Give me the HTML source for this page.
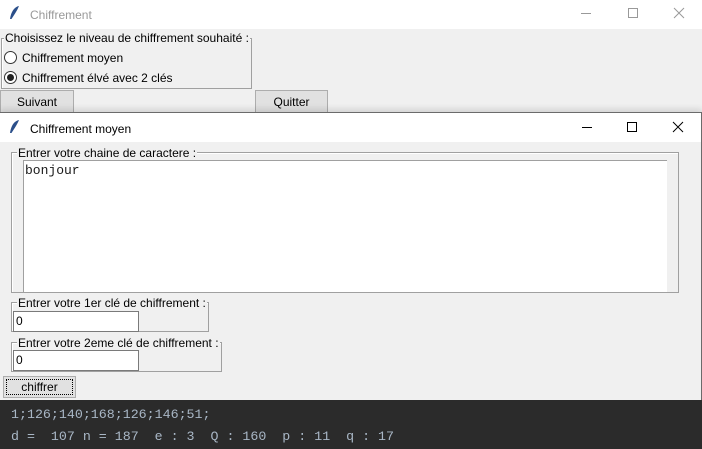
<!DOCTYPE html>
<html><head><meta charset="utf-8"><style>
*{margin:0;padding:0;box-sizing:border-box}
body{width:702px;height:449px;overflow:hidden;background:#f0f0f0;position:relative;font-family:"Liberation Sans",sans-serif;font-size:12px;color:#000}
.a{position:absolute}
.lf{position:absolute;border:1px solid #a0a0a0;box-shadow:inset 1px 1px 0 #fff}
.lbl{position:absolute;background:#f0f0f0;padding:0 1px;white-space:nowrap;line-height:13px}
.btn{position:absolute;background:#e1e1e1;border:1px solid #adadad;text-align:center;line-height:22px}
.ent{position:absolute;background:#fff;border:1px solid #7a7a7a;padding-left:2px;line-height:19px}
.rad{position:absolute;width:13px;height:13px;border:1px solid #333;border-radius:50%;background:#fff}
</style></head><body>
<div class="a" style="left:0;top:0;width:702px;height:29px;background:#fff"></div>
<svg class="a" style="left:8px;top:5px" width="12" height="16" viewBox="0 0 12 16"><path d="M11 1 C6 2 3 7 2 14 L3.5 14 C6 10 9 6 11 1Z" fill="#2b4f8a"/></svg>
<div class="a" style="left:30px;top:8px;color:#999;font-size:12px">Chiffrement</div>
<div class="a" style="left:581px;top:13px;width:10px;height:1px;background:#999"></div>
<div class="a" style="left:628px;top:8px;width:10px;height:10px;border:1px solid #999"></div>
<svg class="a" style="left:673px;top:7px" width="12" height="12"><path d="M1 1L11 11M11 1L1 11" stroke="#999"/></svg>

<div class="lf" style="left:1px;top:38px;width:251px;height:51px"></div>
<div class="lbl" style="left:4px;top:32px">Choisissez le niveau de chiffrement souhaité :</div>
<div class="rad" style="left:4px;top:51px"></div>
<div class="a" style="left:22px;top:51px">Chiffrement moyen</div>
<div class="rad" style="left:4px;top:71px"></div>
<div class="a" style="left:7px;top:74px;width:7px;height:7px;border-radius:50%;background:#222"></div>
<div class="a" style="left:22px;top:71px">Chiffrement élvé avec 2 clés</div>
<div class="btn" style="left:0;top:90px;width:74px;height:24px">Suivant</div>
<div class="btn" style="left:255px;top:90px;width:73px;height:24px">Quitter</div>

<div class="a" style="left:0;top:112px;width:702px;height:289px;border:1px solid #6b6b6b;border-left:none;background:#f0f0f0;box-shadow:0 -3px 6px rgba(0,0,0,.12)"></div>
<div class="a" style="left:0;top:113px;width:701px;height:29px;background:#fff"></div>
<svg class="a" style="left:8px;top:119px" width="12" height="16" viewBox="0 0 12 16"><path d="M11 1 C6 2 3 7 2 14 L3.5 14 C6 10 9 6 11 1Z" fill="#2b4f8a"/></svg>
<div class="a" style="left:30px;top:122px">Chiffrement moyen</div>
<div class="a" style="left:582px;top:127px;width:10px;height:1px;background:#000"></div>
<div class="a" style="left:627px;top:122px;width:10px;height:10px;border:1px solid #000"></div>
<svg class="a" style="left:672px;top:121px" width="12" height="12"><path d="M1 1L11 11M11 1L1 11" stroke="#000"/></svg>

<div class="lf" style="left:11px;top:152px;width:668px;height:141px"></div>
<div class="lbl" style="left:17px;top:147px">Entrer votre chaine de caractere :</div>
<div class="a" style="left:23px;top:160px;width:644px;height:132px;background:#fff;border-top:1px solid #a0a0a0;border-left:1px solid #a0a0a0"></div>
<div class="a" style="left:25px;top:163px;font-family:'Liberation Mono',monospace;font-size:13px;color:#1a1a1a">bonjour</div>

<div class="lf" style="left:11px;top:302px;width:198px;height:30px"></div>
<div class="lbl" style="left:17px;top:297px">Entrer votre 1er clé de chiffrement :</div>
<div class="ent" style="left:13px;top:311px;width:126px;height:21px">0</div>
<div class="lf" style="left:11px;top:342px;width:211px;height:30px"></div>
<div class="lbl" style="left:17px;top:337px">Entrer votre 2eme clé de chiffrement :</div>
<div class="ent" style="left:13px;top:350px;width:126px;height:21px">0</div>
<div class="btn" style="left:3px;top:376px;width:73px;height:22px;line-height:21px;outline:1px dotted #000;outline-offset:-4px">chiffrer</div>

<div class="a" style="left:0;top:400px;width:702px;height:49px;background:#2b2b2b"></div>
<div class="a" style="left:11px;top:404px;font-family:'Liberation Mono',monospace;font-size:13.3px;color:#a9b7c6;white-space:pre;line-height:22px">1;126;140;168;126;146;51;
d =  107 n = 187  e : 3  Q : 160  p : 11  q : 17</div>
</body></html>
